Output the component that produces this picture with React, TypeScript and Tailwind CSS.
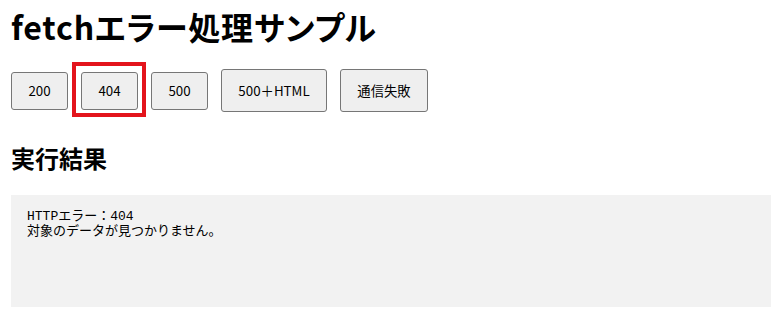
import React from "react";

const btn =
  "rounded-[3px] border border-[#767676] bg-[#efefef] text-[13.33px] text-black leading-none flex items-center justify-center";

export default function App() {
  return (
    <div className="min-h-[317px] bg-white pl-[11px] pr-[12px] pt-[6px] text-black font-['Noto_Sans_CJK_JP','Noto_Sans',sans-serif]">
      <h1 className="text-[32px] font-bold leading-[40px] [font-feature-settings:'palt'] tracking-[0.8px]">
        fetchエラー処理サンプル
      </h1>
      <div className="relative mt-[23px] flex items-center gap-[13px]">
        <button className={`${btn} h-[38px] w-[57px]`}>200</button>
        <div className="relative">
          <button className={`${btn} h-[38px] w-[57px]`}>404</button>
          <div className="pointer-events-none absolute left-[-9px] top-[-10px] h-[55px] w-[74px] border-[4px] border-[#e3141c]" />
        </div>
        <button className={`${btn} h-[38px] w-[57px]`}>500</button>
        <button className={`${btn} h-[43px] w-[106px]`}>500＋HTML</button>
        <button className={`${btn} h-[43px] w-[88px]`}>通信失敗</button>
      </div>
      <h2 className="mt-[30px] text-[24px] font-bold leading-[32px]">実行結果</h2>
      <pre className="mt-[21px] h-[112px] bg-[#f2f2f2] px-4 pt-[15px] text-[13px] leading-[14.5px] font-['Liberation_Mono','Noto_Sans_CJK_JP',monospace]">
        {"HTTPエラー：404\n対象のデータが見つかりません。"}
      </pre>
    </div>
  );
}
